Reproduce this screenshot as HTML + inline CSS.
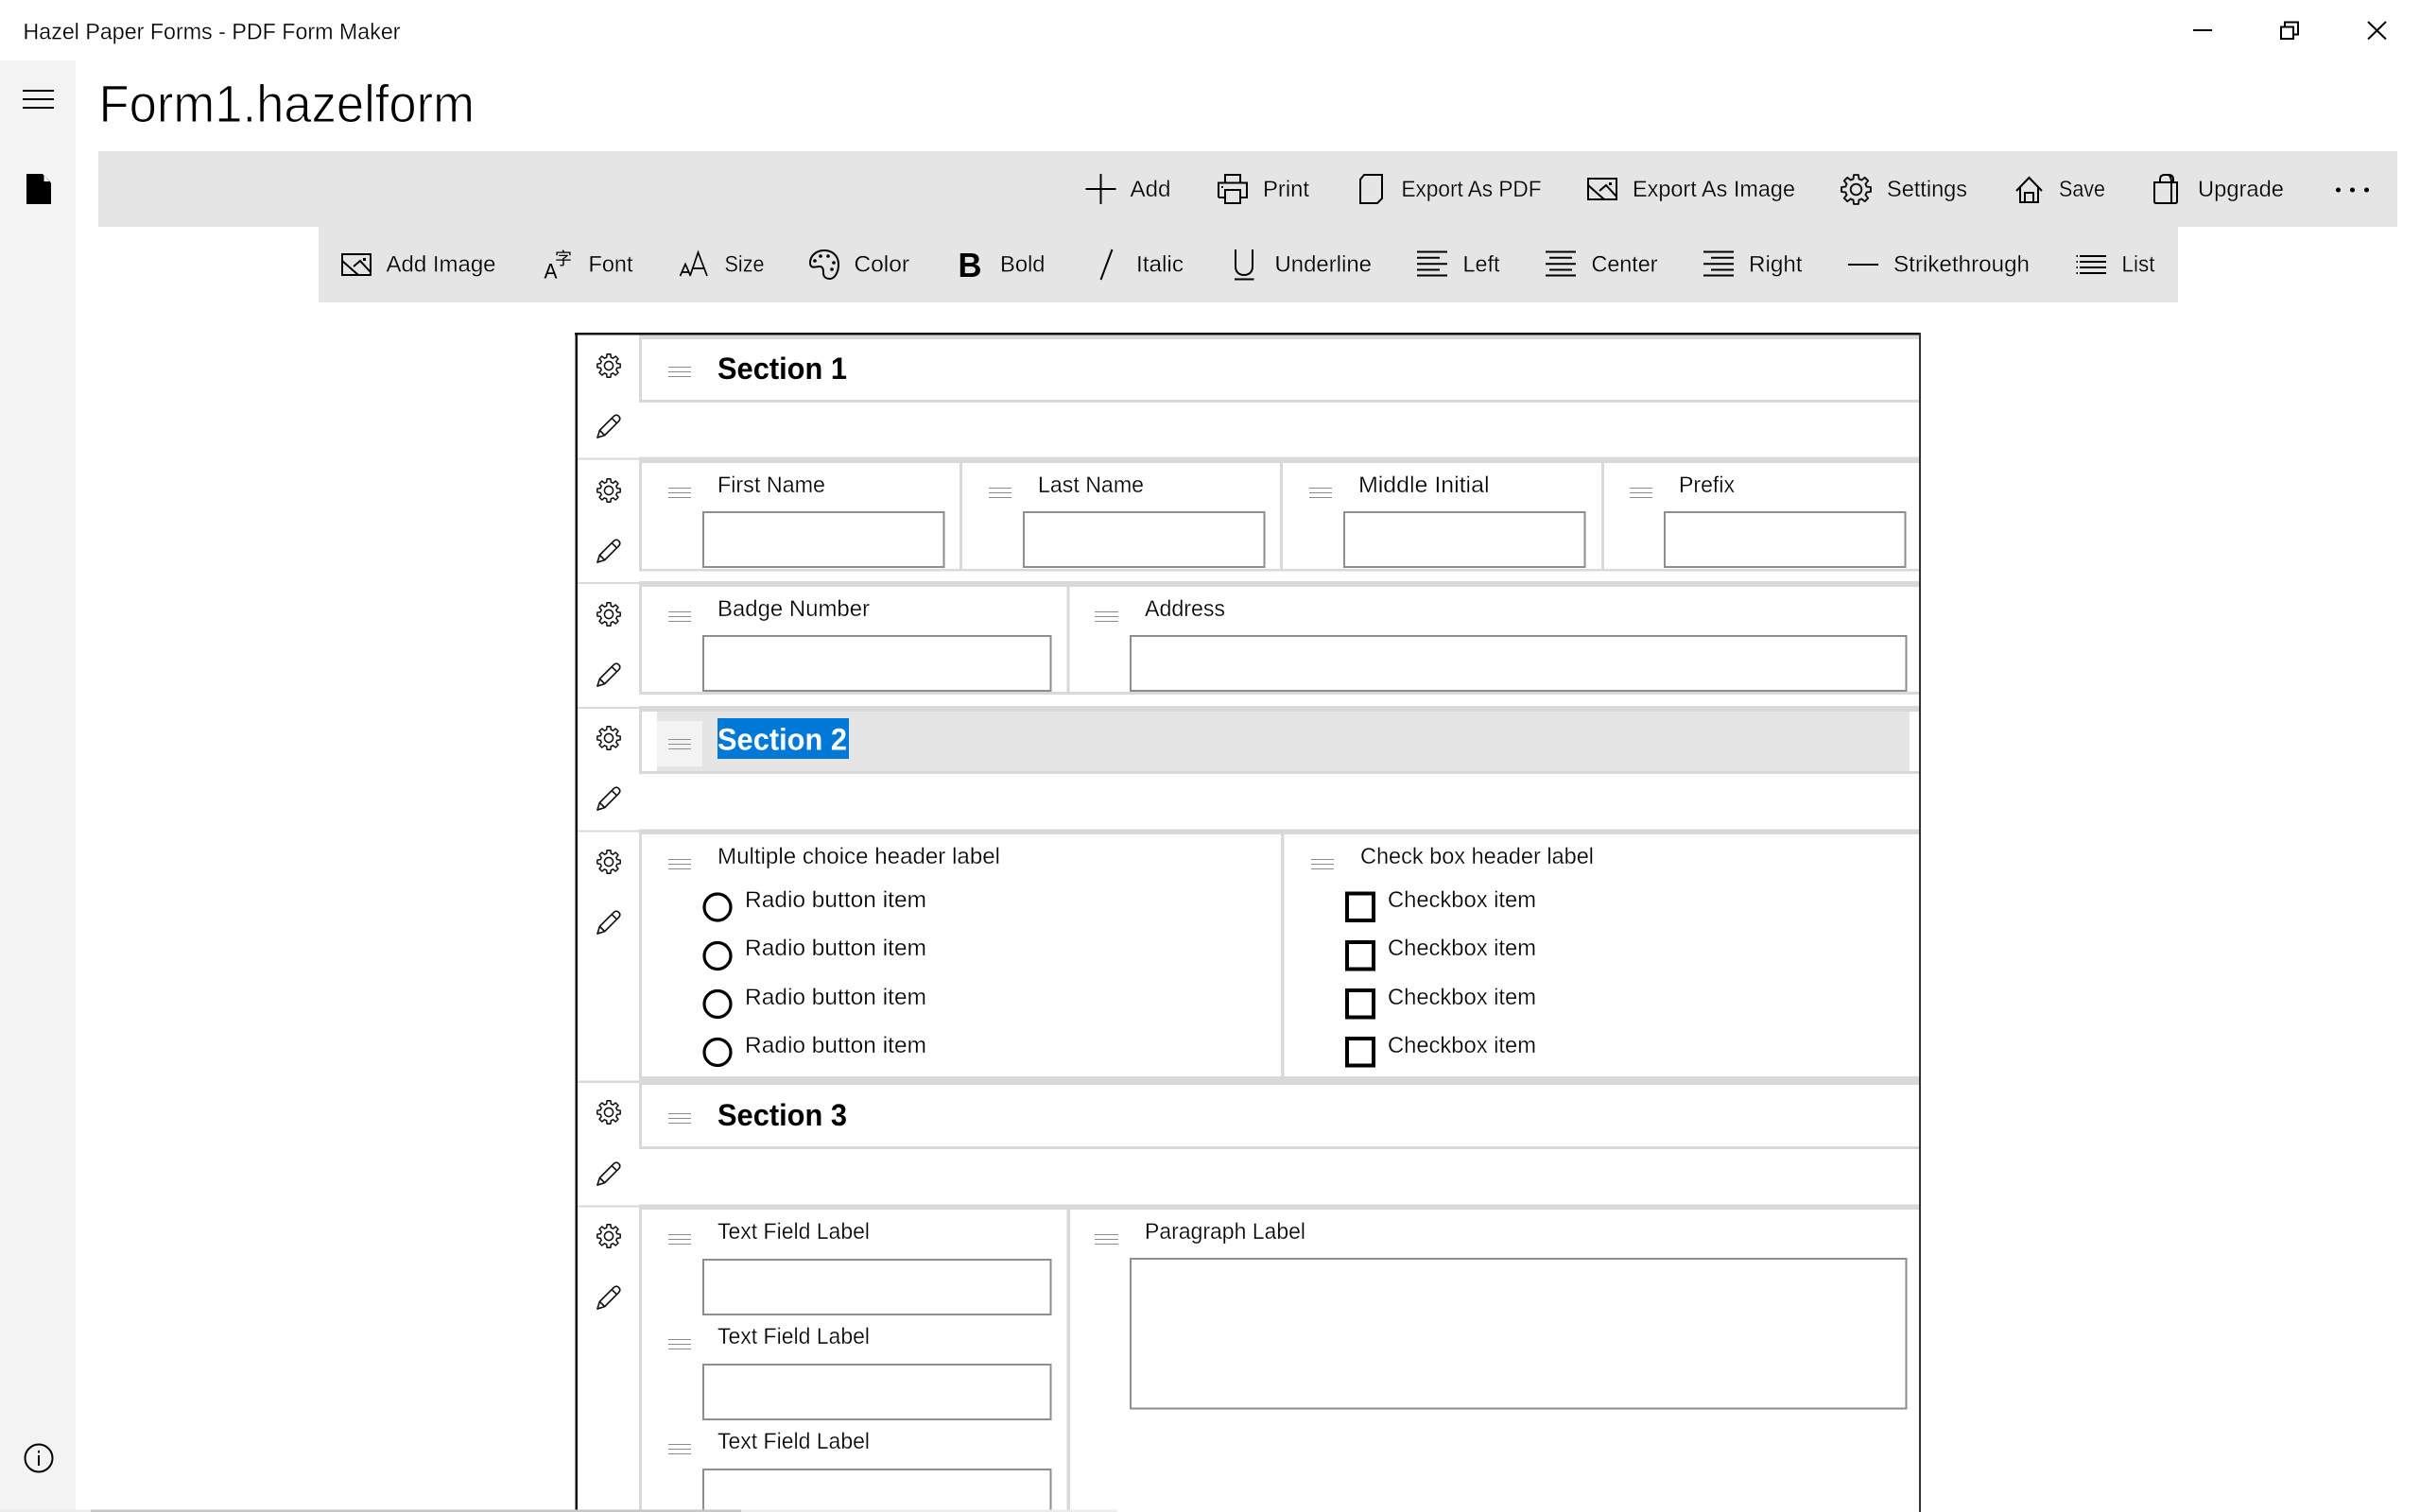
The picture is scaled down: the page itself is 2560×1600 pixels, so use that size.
<!DOCTYPE html>
<html><head><meta charset="utf-8"><title>Hazel Paper Forms - PDF Form Maker</title>
<style>
html,body{margin:0;padding:0;background:#fff;width:2560px;height:1600px;overflow:hidden}
svg{display:block;position:absolute;left:0;top:0}
text{font-family:"Liberation Sans","Noto Sans CJK SC",sans-serif;fill:#000;font-size:24px}
.w{stroke:#fff;stroke-width:.3px}
.g{stroke:#e5e5e5;stroke-width:.3px}
.s{font-size:32px;font-weight:bold}
.ic{fill:none;stroke:#000;stroke-width:2}
.sep{fill:#d9d9d9}
.in{fill:#fff;stroke:#8e8e8e;stroke-width:2}
.h{fill:none;stroke:#8c8c8c;stroke-width:1;shape-rendering:crispEdges}
.rad{fill:none;stroke:#000;stroke-width:3.2}
.chk{fill:none;stroke:#000;stroke-width:4}
</style></head><body>
<svg width="2560" height="1600" viewBox="0 0 2560 1600" xmlns="http://www.w3.org/2000/svg">
<defs>
<symbol id="gear" viewBox="-13.7 -13.7 27.4 27.4" overflow="visible">
<path d="M-2.46 -9.18L-2.03 -12.84L2.03 -12.84L2.46 -9.18A9.5 9.5 0 0 1 4.75 -8.23L7.64 -10.52L10.52 -7.64L8.23 -4.75A9.5 9.5 0 0 1 9.18 -2.46L12.84 -2.03L12.84 2.03L9.18 2.46A9.5 9.5 0 0 1 8.23 4.75L10.52 7.64L7.64 10.52L4.75 8.23A9.5 9.5 0 0 1 2.46 9.18L2.03 12.84L-2.03 12.84L-2.46 9.18A9.5 9.5 0 0 1 -4.75 8.23L-7.64 10.52L-10.52 7.64L-8.23 4.75A9.5 9.5 0 0 1 -9.18 2.46L-12.84 2.03L-12.84 -2.03L-9.18 -2.46A9.5 9.5 0 0 1 -8.23 -4.75L-10.52 -7.64L-7.64 -10.52L-4.75 -8.23A9.5 9.5 0 0 1 -2.46 -9.18Z" fill="none" stroke="#111" stroke-width="1.6" stroke-linejoin="round"/>
<circle r="4.8" fill="none" stroke="#111" stroke-width="1.6"/>
</symbol>
<symbol id="pencil" viewBox="-13.5 -13.5 27 27" overflow="visible">
<path d="M-12.5 12.5L-10 4.5L5.5 -11Q8.5 -13.5 11 -11Q13.5 -8.5 11 -5.5L-4.5 10ZM3.3 -8.8L8.8 -3.3M-10 4.5L-4.5 10" fill="none" stroke="#111" stroke-width="1.7" stroke-linejoin="round"/>
</symbol>
<symbol id="pic" viewBox="0 0 32 24">
<path d="M1 1H31V23H1ZM1 8L18 23M13 14L20 8L31 20" fill="none" stroke="#000" stroke-width="2"/>
<rect x="23" y="5" width="3" height="3" fill="#000"/>
</symbol>
</defs>

<!-- sidebar -->
<rect x="0" y="64" width="80" height="1536" fill="#f3f3f3"/>
<rect x="24" y="95" width="33" height="2"/><rect x="24" y="104" width="33" height="2"/><rect x="24" y="113" width="33" height="2"/>
<path d="M28 184H45L54 193.5V216H28ZM46.5 185.5V192H53Z" fill-rule="evenodd"/>
<circle cx="41" cy="1543" r="14.5" class="ic"/><rect x="40" y="1540" width="2" height="11"/><rect x="40" y="1535" width="2" height="2.5"/>

<!-- title bar -->
<text x="24.5" y="41.5" textLength="399" lengthAdjust="spacingAndGlyphs" class="w">Hazel Paper Forms - PDF Form Maker</text>
<rect x="2320" y="31" width="20" height="2"/>
<path d="M2413 28.5H2426V41H2413ZM2417 28V23.5H2431V36.5H2426.5" class="ic"/>
<path d="M2505 23L2524 41.5M2524 23L2505 41.5" class="ic" stroke-width="1.7"/>
<text x="104.500" y="129" textLength="397.500" lengthAdjust="spacingAndGlyphs" style="font-size:56px;stroke:#fff;stroke-width:1.1px">Form1.hazelform</text>

<!-- toolbars -->
<rect x="104" y="160" width="2432" height="80" fill="#e5e5e5"/>
<rect x="337" y="240" width="1967" height="80" fill="#e5e5e5"/>

<!-- row 1 -->
<path d="M1148.5 200H1180.5M1164.5 184V216" class="ic"/>
<text x="1195.500" y="208" textLength="43" lengthAdjust="spacingAndGlyphs" class="g">Add</text>
<path d="M1296 193V185H1312V193M1289 209V193.5H1319V209H1312M1296 209H1289M1296 201H1312V215H1296Z" class="ic"/><rect x="1292" y="197" width="2" height="2"/>
<text x="1336" y="208" textLength="49" lengthAdjust="spacingAndGlyphs" class="g">Print</text>
<path d="M1443 185H1462V210L1457 215H1439V190Z" class="ic"/>
<text x="1482.500" y="208" textLength="148" lengthAdjust="spacingAndGlyphs" class="g">Export As PDF</text>
<use href="#pic" x="1679" y="188" width="32" height="24"/>
<text x="1727" y="208" textLength="172" lengthAdjust="spacingAndGlyphs" class="g">Export As Image</text>
<use href="#gear" x="1947" y="184" width="33" height="33"/>
<text x="1996" y="208" textLength="85" lengthAdjust="spacingAndGlyphs" class="g">Settings</text>
<path d="M2133 202L2146.500 188L2160 202M2137 198.500V214H2156V198.500M2142 214V204H2151V214" class="ic"/>
<text x="2178" y="208" textLength="49" lengthAdjust="spacingAndGlyphs" class="g">Save</text>
<path d="M2279 193H2303V213Q2303 215 2301 215H2281Q2279 215 2279 213ZM2285 193V190Q2285 185 2290 185H2294Q2299 185 2299 190V193M2294 185Q2297 187 2297 193V215" class="ic"/>
<text x="2325" y="208" textLength="91" lengthAdjust="spacingAndGlyphs" class="g">Upgrade</text>
<circle cx="2473.500" cy="201" r="2.500"/><circle cx="2488.500" cy="201" r="2.500"/><circle cx="2503.500" cy="201" r="2.500"/>

<!-- row 2 -->
<use href="#pic" x="361" y="268" width="32" height="24"/>
<text x="408.500" y="287.500" textLength="116" lengthAdjust="spacingAndGlyphs" class="g">Add Image</text>
<text x="575.500" y="294.500" textLength="14" lengthAdjust="spacingAndGlyphs" style="font-size:22px">A</text>
<text x="587" y="280" style="font-size:18px">字</text>
<text x="622.500" y="287.500" textLength="47" lengthAdjust="spacingAndGlyphs" class="g">Font</text>
<path d="M719.500 292L725 279.500L730.500 292M721.500 288H728.500M730 292L738.500 267L748 292M733 284H745.500" fill="none" stroke="#000" stroke-width="1.7"/>
<text x="766.500" y="287.500" textLength="42" lengthAdjust="spacingAndGlyphs" class="g">Size</text>
<path d="M872 265C862 265 857 272 857 278C857 285 863 282 867 282C871 282 871 286 871 289C871 293 874 295 878 295C883 295 887 288 887 280C887 271 881 265 872 265Z" class="ic"/>
<circle cx="868" cy="271" r="1.800"/><circle cx="876" cy="271" r="1.800"/><circle cx="882" cy="278" r="1.800"/><circle cx="862" cy="276" r="1.800"/><circle cx="880" cy="285" r="1.800"/>
<text x="903.500" y="287.500" textLength="58.500" lengthAdjust="spacingAndGlyphs" class="g">Color</text>
<text x="1013.500" y="293" textLength="25" lengthAdjust="spacingAndGlyphs" style="font-size:36px;font-weight:bold">B</text>
<text x="1058" y="287.500" textLength="47.500" lengthAdjust="spacingAndGlyphs" class="g">Bold</text>
<path d="M1176.500 264L1164.500 296" class="ic"/>
<text x="1202" y="287.500" textLength="50" lengthAdjust="spacingAndGlyphs" class="g">Italic</text>
<path d="M1307 264V282C1307 288 1311 291 1316 291C1321 291 1325 288 1325 282V264" class="ic"/><rect x="1306" y="294.500" width="20.500" height="2"/>
<text x="1348.500" y="287.500" textLength="102.500" lengthAdjust="spacingAndGlyphs" class="g">Underline</text>
<path d="M1499 266.500H1531M1499 272.800H1523M1499 279.200H1531M1499 285.500H1523M1499 291.500H1531" class="ic"/>
<text x="1547.500" y="287.500" textLength="39" lengthAdjust="spacingAndGlyphs" class="g">Left</text>
<path d="M1635 266.500H1667M1639 272.800H1663M1635 279.200H1667M1639 285.500H1663M1635 291.500H1667" class="ic"/>
<text x="1683.500" y="287.500" textLength="70" lengthAdjust="spacingAndGlyphs" class="g">Center</text>
<path d="M1802 266.500H1834M1810 272.800H1834M1802 279.200H1834M1810 285.500H1834M1802 291.500H1834" class="ic"/>
<text x="1850" y="287.500" textLength="56.500" lengthAdjust="spacingAndGlyphs" class="g">Right</text>
<rect x="1955" y="279" width="32" height="2"/>
<text x="2003" y="287.500" textLength="144" lengthAdjust="spacingAndGlyphs" class="g">Strikethrough</text>
<path d="M2200 271H2228M2200 277H2228M2200 283H2228M2200 289H2228" class="ic"/><path d="M2196.500 271H2198M2196.500 277H2198M2196.500 283H2198M2196.500 289H2198" class="ic"/>
<text x="2244.500" y="287.500" textLength="35" lengthAdjust="spacingAndGlyphs" class="g">List</text>

<!-- separators -->
<rect class="sep" x="676" y="354" width="1354" height="5"/>
<rect class="sep" x="676" y="423" width="1354" height="3"/>
<rect class="sep" x="676" y="483.500" width="1354" height="6.500"/>
<rect class="sep" x="611" y="484.500" width="65" height="2"/>
<rect class="sep" x="676" y="602" width="1354" height="2.500"/>
<rect class="sep" x="676" y="615" width="1354" height="6"/>
<rect class="sep" x="611" y="616" width="65" height="2"/>
<rect class="sep" x="676" y="732" width="1354" height="3"/>
<rect class="sep" x="676" y="747" width="1354" height="6"/>
<rect class="sep" x="611" y="748" width="65" height="2"/>
<rect class="sep" x="676" y="816" width="1354" height="3"/>
<rect class="sep" x="676" y="877.500" width="1354" height="5.500"/>
<rect class="sep" x="611" y="878.500" width="65" height="2"/>
<rect class="sep" x="676" y="1139" width="1354" height="9"/>
<rect class="sep" x="611" y="1143.500" width="65" height="2.500"/>
<rect class="sep" x="676" y="1213" width="1354" height="3"/>
<rect class="sep" x="676" y="1274.500" width="1354" height="5.500"/>
<rect class="sep" x="611" y="1275.500" width="65" height="2"/>
<!-- left strips -->
<rect class="sep" x="676" y="354" width="3" height="72"/>
<rect class="sep" x="676" y="483.500" width="3" height="121"/>
<rect class="sep" x="676" y="615" width="3" height="120"/>
<rect class="sep" x="676" y="747" width="3" height="72"/>
<rect class="sep" x="676" y="877.500" width="3" height="338.500"/>
<rect class="sep" x="676" y="1274.500" width="3" height="325"/>
<!-- dividers -->
<rect class="sep" x="1015" y="490" width="3" height="112"/>
<rect class="sep" x="1354" y="490" width="3" height="112"/>
<rect class="sep" x="1694" y="490" width="3" height="112"/>
<rect class="sep" x="1128.500" y="621" width="3" height="111"/>
<rect class="sep" x="1355" y="883" width="3.500" height="256"/>
<rect class="sep" x="1128.500" y="1280" width="3.500" height="320"/>

<!-- form frame -->
<rect x="608" y="352" width="1424" height="2.500" fill="#111"/>
<rect x="608.500" y="352" width="2.500" height="1248" fill="#111"/>
<rect x="2030" y="352" width="2" height="1248" fill="#333"/>

<!-- gears & pencils -->
<use href="#gear" x="631" y="374" width="26" height="26"/><use href="#pencil" x="631" y="438" width="26" height="26"/>
<use href="#gear" x="631" y="506" width="26" height="26"/><use href="#pencil" x="631" y="570" width="26" height="26"/>
<use href="#gear" x="631" y="637" width="26" height="26"/><use href="#pencil" x="631" y="701" width="26" height="26"/>
<use href="#gear" x="631" y="768" width="26" height="26"/><use href="#pencil" x="631" y="832" width="26" height="26"/>
<use href="#gear" x="631" y="899" width="26" height="26"/><use href="#pencil" x="631" y="963" width="26" height="26"/>
<use href="#gear" x="631" y="1164" width="26" height="26"/><use href="#pencil" x="631" y="1229" width="26" height="26"/>
<use href="#gear" x="631" y="1295" width="26" height="26"/><use href="#pencil" x="631" y="1360" width="26" height="26"/>

<!-- section 2 selected -->
<rect x="695" y="753" width="1325" height="63" fill="#e5e5e5"/>
<rect x="695" y="763" width="48" height="48" fill="#f3f3f3"/>
<rect x="759" y="760" width="139" height="43" fill="#0078d7"/>

<!-- handles -->
<path class="h" d="M707 388.500H731M707 393.500H731M707 398.500H731"/>
<path class="h" d="M707 516.500H731M707 521.500H731M707 526.500H731M1046 516.500H1070M1046 521.500H1070M1046 526.500H1070M1385 516.500H1409M1385 521.500H1409M1385 526.500H1409M1724 516.500H1748M1724 521.500H1748M1724 526.500H1748"/>
<path class="h" d="M707 647.500H731M707 652.500H731M707 657.500H731M1158 647.500H1183M1158 652.500H1183M1158 657.500H1183"/>
<path class="h" d="M707 782.500H731M707 787.500H731M707 792.500H731"/>
<path class="h" d="M707 909.500H731M707 914.500H731M707 919.500H731M1387 909.500H1411M1387 914.500H1411M1387 919.500H1411"/>
<path class="h" d="M707 1178.500H731M707 1183.500H731M707 1188.500H731"/>
<path class="h" d="M707 1306.500H731M707 1311.500H731M707 1316.500H731M707 1417.500H731M707 1422.500H731M707 1427.500H731M707 1528.500H731M707 1533.500H731M707 1538.500H731M1158 1306.500H1183M1158 1311.500H1183M1158 1316.500H1183"/>

<!-- inputs -->
<rect class="in" x="744" y="542" width="254.500" height="58"/>
<rect class="in" x="1083" y="542" width="254.500" height="58"/>
<rect class="in" x="1422" y="542" width="254.500" height="58"/>
<rect class="in" x="1761" y="542" width="254.500" height="58"/>
<rect class="in" x="744" y="673" width="367.500" height="58"/>
<rect class="in" x="1196" y="673" width="820.500" height="58"/>
<rect class="in" x="744" y="1333" width="367.500" height="58"/>
<rect class="in" x="744" y="1444" width="367.500" height="58"/>
<rect class="in" x="744" y="1555" width="367.500" height="60"/>
<rect class="in" x="1196" y="1332" width="820.500" height="158.500"/>

<!-- section titles -->
<text x="759" y="401" textLength="137" lengthAdjust="spacingAndGlyphs" class="s">Section 1</text>
<text x="759" y="793.500" textLength="137" lengthAdjust="spacingAndGlyphs" class="s" style="fill:#fff">Section 2</text>
<text x="759" y="1191" textLength="137" lengthAdjust="spacingAndGlyphs" class="s">Section 3</text>

<!-- labels -->
<text x="759" y="521" textLength="114" lengthAdjust="spacingAndGlyphs" class="w">First Name</text>
<text x="1098" y="521" textLength="112" lengthAdjust="spacingAndGlyphs" class="w">Last Name</text>
<text x="1437" y="521" textLength="138.500" lengthAdjust="spacingAndGlyphs" class="w">Middle Initial</text>
<text x="1776" y="521" textLength="59" lengthAdjust="spacingAndGlyphs" class="w">Prefix</text>
<text x="759" y="652" textLength="161" lengthAdjust="spacingAndGlyphs" class="w">Badge Number</text>
<text x="1211" y="652" textLength="85" lengthAdjust="spacingAndGlyphs" class="w">Address</text>
<text x="759" y="914" textLength="299" lengthAdjust="spacingAndGlyphs" class="w">Multiple choice header label</text>
<text x="1439" y="914" textLength="247" lengthAdjust="spacingAndGlyphs" class="w">Check box header label</text>

<circle class="rad" cx="759" cy="960" r="14"/><circle class="rad" cx="759" cy="1011.500" r="14"/><circle class="rad" cx="759" cy="1062.500" r="14"/><circle class="rad" cx="759" cy="1113.500" r="14"/>
<text x="788" y="960" textLength="192" lengthAdjust="spacingAndGlyphs" class="w">Radio button item</text>
<text x="788" y="1011" textLength="192" lengthAdjust="spacingAndGlyphs" class="w">Radio button item</text>
<text x="788" y="1063" textLength="192" lengthAdjust="spacingAndGlyphs" class="w">Radio button item</text>
<text x="788" y="1114" textLength="192" lengthAdjust="spacingAndGlyphs" class="w">Radio button item</text>

<rect class="chk" x="1425" y="945.500" width="28" height="28.500"/><rect class="chk" x="1425" y="997" width="28" height="28.500"/><rect class="chk" x="1425" y="1048" width="28" height="28.500"/><rect class="chk" x="1425" y="1099" width="28" height="28.500"/>
<text x="1468" y="960" textLength="157" lengthAdjust="spacingAndGlyphs" class="w">Checkbox item</text>
<text x="1468" y="1011" textLength="157" lengthAdjust="spacingAndGlyphs" class="w">Checkbox item</text>
<text x="1468" y="1063" textLength="157" lengthAdjust="spacingAndGlyphs" class="w">Checkbox item</text>
<text x="1468" y="1114" textLength="157" lengthAdjust="spacingAndGlyphs" class="w">Checkbox item</text>

<text x="759" y="1311" textLength="161" lengthAdjust="spacingAndGlyphs" class="w">Text Field Label</text>
<text x="759" y="1422" textLength="161" lengthAdjust="spacingAndGlyphs" class="w">Text Field Label</text>
<text x="759" y="1533" textLength="161" lengthAdjust="spacingAndGlyphs" class="w">Text Field Label</text>
<text x="1211" y="1311" textLength="170" lengthAdjust="spacingAndGlyphs" class="w">Paragraph Label</text>

<!-- scrollbar -->
<rect x="0" y="1597.500" width="1182" height="2.500" fill="#ececec"/>
<rect x="96" y="1597.500" width="688" height="2.500" fill="#c6c6c6"/>
</svg>
</body></html>
